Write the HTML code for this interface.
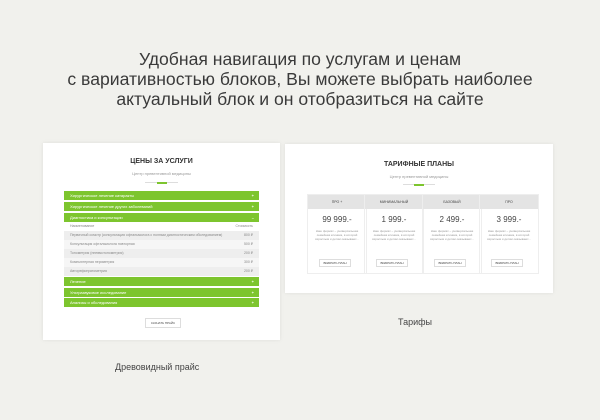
<!DOCTYPE html>
<html><head><meta charset="utf-8"><style>
*{margin:0;padding:0;box-sizing:border-box}
body{width:600px;height:420px;background:#f1f1ed;font-family:"Liberation Sans","Noto Sans CJK SC",sans-serif;position:relative;overflow:hidden;color:#333}
.hl{position:absolute;left:0;top:49px;width:600px;text-align:center;font-size:17.6px;line-height:20px;color:#3a3a3a}
.card{position:absolute;background:#fff;box-shadow:0 0 4px rgba(0,0,0,.08)}
.t{position:absolute;left:0;width:100%;text-align:center;font-weight:bold;color:#333}
.s{position:absolute;left:0;width:100%;text-align:center;font-size:4px;color:#999}
.ln{position:absolute;height:1px;background:#ddd}
.ln i{position:absolute;left:50%;margin-left:-5px;top:-0.5px;width:10px;height:2px;background:#7dc52e}
.bar{position:absolute;left:21px;width:195px;height:9px;background:#7dc52e;color:#fff;font-size:4px;line-height:9px;padding-left:6px}
.bar b{position:absolute;right:5px;top:0;font-weight:bold}
.row{position:absolute;left:21px;width:195px;height:9px;font-size:3.5px;line-height:9px;color:#888;padding:0 6px}
.row span{float:right}
.btn{position:absolute;border:1px solid #ddd;background:#fff;font-size:3px;text-align:center;color:#444}
.col{position:absolute;top:50px;width:60px;height:80px;border:1px solid #eee}
.col .h{height:14px;background:#e4e4e4;font-size:3.5px;line-height:14px;text-align:center;color:#444}
.col .p{margin-top:6px;text-align:center;font-size:8px;color:#444}
.col .d{margin:5px 6px 0;text-align:center;font-size:3px;line-height:4px;color:#999}
.lab{position:absolute;font-size:9px;color:#444}
</style></head><body>
<div class="hl">Удобная навигация по услугам и ценам<br>с вариативностью блоков, Вы можете выбрать наиболее<br>актуальный блок и он отобразиться на сайте</div>

<div class="card" style="left:43px;top:143px;width:237px;height:197px">
<div class="t" style="top:15px;font-size:7px">ЦЕНЫ ЗА УСЛУГИ</div>
<div class="s" style="top:28px">Центр превентивной медицины</div>
<div class="ln" style="left:102px;top:39px;width:33px"><i></i></div>
<div class="bar" style="top:48px">Хирургическое лечение катаракты<b>+</b></div>
<div class="bar" style="top:59px">Хирургическое лечение других заболеваний<b>+</b></div>
<div class="bar" style="top:70px">Диагностика и консультации<b>–</b></div>
<div class="row" style="top:79px">Наименование<span>Стоимость</span></div>
<div class="row" style="top:88px;background:#eee">Первичный осмотр (консультация офтальмолога с полным диагностическим обследованием)<span>800 ₽</span></div>
<div class="row" style="top:97px;background:#f6f6f6">Консультация офтальмолога повторная<span>500 ₽</span></div>
<div class="row" style="top:106px;background:#eee">Тонометрия (пневмотонометрия)<span>200 ₽</span></div>
<div class="row" style="top:115px;background:#f6f6f6">Компьютерная периметрия<span>300 ₽</span></div>
<div class="row" style="top:124px;background:#eee">Авторефкератометрия<span>200 ₽</span></div>
<div class="bar" style="top:134px">Лечение<b>+</b></div>
<div class="bar" style="top:145px">Ультразвуковое исследование<b>+</b></div>
<div class="bar" style="top:155px">Анализы и обследования<b>+</b></div>
<div class="btn" style="left:102px;top:175px;width:36px;height:10px;line-height:8px">СКАЧАТЬ ПРАЙС</div>
</div>

<div class="card" style="left:285px;top:144px;width:268px;height:149px">
<div class="t" style="top:17px;font-size:7px">ТАРИФНЫЕ ПЛАНЫ</div>
<div class="s" style="top:30px">Центр превентивной медицины</div>
<div class="ln" style="left:118px;top:40px;width:32px"><i></i></div>
<div class="col" style="left:22px"><div class="h">ПРО +</div><div class="p">99 999.-</div><div class="d">Наш формат – универсальная семейная клиника, в которой взрослым и детям оказывают...</div><div class="btn" style="left:11px;top:64px;width:32px;height:8px;line-height:6px">ВЫБРАТЬ ПЛАН</div></div>
<div class="col" style="left:79px"><div class="h">МИНИМАЛЬНЫЙ</div><div class="p">1 999.-</div><div class="d">Наш формат – универсальная семейная клиника, в которой взрослым и детям оказывают...</div><div class="btn" style="left:11px;top:64px;width:32px;height:8px;line-height:6px">ВЫБРАТЬ ПЛАН</div></div>
<div class="col" style="left:137px"><div class="h">БАЗОВЫЙ</div><div class="p">2 499.-</div><div class="d">Наш формат – универсальная семейная клиника, в которой взрослым и детям оказывают...</div><div class="btn" style="left:11px;top:64px;width:32px;height:8px;line-height:6px">ВЫБРАТЬ ПЛАН</div></div>
<div class="col" style="left:194px"><div class="h">ПРО</div><div class="p">3 999.-</div><div class="d">Наш формат – универсальная семейная клиника, в которой взрослым и детям оказывают...</div><div class="btn" style="left:11px;top:64px;width:32px;height:8px;line-height:6px">ВЫБРАТЬ ПЛАН</div></div>
</div>

<div class="lab" style="left:398px;top:317px">Тарифы</div>
<div class="lab" style="left:115px;top:362px">Древовидный прайс</div>
</body></html>
